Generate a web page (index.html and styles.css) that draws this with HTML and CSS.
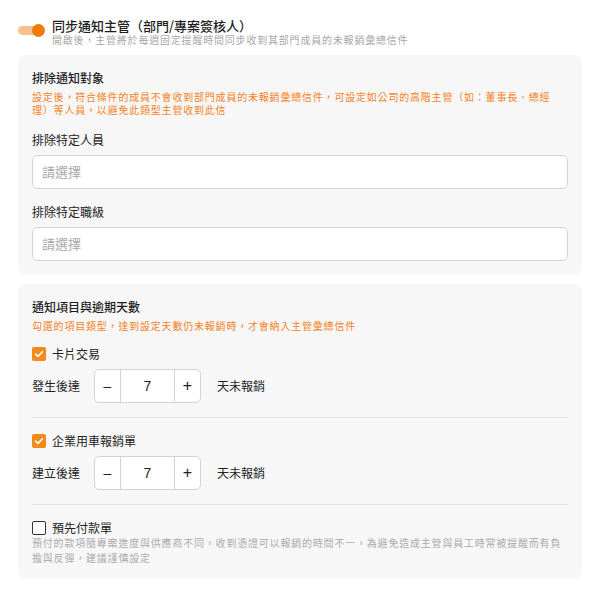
FILE: index.html
```html
<!DOCTYPE html>
<html lang="zh-Hant">
<head>
<meta charset="utf-8">
<link rel="stylesheet" href="styles.css">
</head>
<body>
<div class="page">
  <div class="header">
    <div class="toggle"><span class="knob"></span></div>
    <div class="header-text">
      <div class="header-title">同步通知主管（部門/專案簽核人）</div>
      <div class="header-sub">開啟後，主管將於每週固定提醒時間同步收到其部門成員的未報銷彙總信件</div>
    </div>
  </div>

  <div class="card">
    <div class="card-title">排除通知對象</div>
    <div class="hint">設定後，符合條件的成員不會收到部門成員的未報銷彙總信件，可設定如公司的高階主管（如：董事長、總經理）等人員，以避免此類型主管收到此信</div>
    <div class="field first">
      <div class="field-label">排除特定人員</div>
      <div class="select">請選擇</div>
    </div>
    <div class="field">
      <div class="field-label">排除特定職級</div>
      <div class="select">請選擇</div>
    </div>
  </div>

  <div class="card">
    <div class="card-title">通知項目與逾期天數</div>
    <div class="hint">勾選的項目類型，達到設定天數仍未報銷時，才會納入主管彙總信件</div>

    <div class="item first">
      <div class="check-row">
        <span class="checkbox checked"><svg viewBox="0 0 14 14" width="14" height="14"><path d="M3.6 7.2 L6 9.4 L10.4 4.8" fill="none" stroke="#fff" stroke-width="1.6" stroke-linecap="round" stroke-linejoin="round"/></svg></span>
        <span class="check-label">卡片交易</span>
      </div>
      <div class="step-row">
        <span class="step-label">發生後達</span>
        <div class="stepper">
          <span class="step-btn minus">–</span>
          <span class="step-val">7</span>
          <span class="step-btn plus">+</span>
        </div>
        <span class="step-after">天未報銷</span>
      </div>
    </div>

    <div class="item">
      <div class="check-row">
        <span class="checkbox checked"><svg viewBox="0 0 14 14" width="14" height="14"><path d="M3.6 7.2 L6 9.4 L10.4 4.8" fill="none" stroke="#fff" stroke-width="1.6" stroke-linecap="round" stroke-linejoin="round"/></svg></span>
        <span class="check-label">企業用車報銷單</span>
      </div>
      <div class="step-row">
        <span class="step-label">建立後達</span>
        <div class="stepper">
          <span class="step-btn minus">–</span>
          <span class="step-val">7</span>
          <span class="step-btn plus">+</span>
        </div>
        <span class="step-after">天未報銷</span>
      </div>
    </div>

    <div class="item last">
      <div class="check-row">
        <span class="checkbox"></span>
        <span class="check-label">預先付款單</span>
      </div>
      <div class="desc">預付的款項隨專案進度與供應商不同，收到憑證可以報銷的時間不一，為避免造成主管與員工時常被提醒而有負擔與反彈，建議謹慎設定</div>
    </div>
  </div>
</div>
</body>
</html>
```

FILE: styles.css
```css
* { box-sizing: border-box; }
html, body { margin: 0; padding: 0; background: #fff; }
body {
  font-family: "Noto Sans CJK TC", "Noto Sans", sans-serif;
  color: #222;
  text-spacing-trim: space-all;
}
.page {
  padding: 18px 12px 0 18px;
  display: flex;
  flex-direction: column;
  gap: 9px;
}
.header {
  display: flex;
  align-items: flex-start;
  gap: 10px;
  margin-bottom: 1px;
}
.toggle {
  position: relative;
  width: 24px;
  height: 9px;
  margin-top: 8px;
  border-radius: 5px;
  background: #f6c28f;
  flex: none;
}
.knob {
  position: absolute;
  right: -3px;
  top: -2px;
  width: 13px;
  height: 13px;
  border-radius: 50%;
  background: #f07a06;
}
.header-text { display: flex; flex-direction: column; }
.header-title {
  font-size: 13px;
  line-height: 14px;
  margin-top: 1px;
  font-weight: 500;
  color: #1e1e1e;
}
.header-sub {
  margin-top: 1px;
  font-size: 10px;
  line-height: 11px;
  letter-spacing: 0.8px;
  color: #a8a8a8;
}
.card {
  background: #f7f7f7;
  border-radius: 7px;
  padding: 14px;
}
.card-title {
  font-size: 12px;
  line-height: 18px;
  font-weight: 500;
  color: #1e1e1e;
}
.hint {
  margin-top: 3px;
  font-size: 10px;
  line-height: 13px;
  letter-spacing: 0.8px;
  color: #f5821f;
}
.field { margin-top: 14px; }
.field.first { margin-top: 15px; }
.field-label {
  font-size: 12px;
  line-height: 18px;
  color: #222;
  margin-bottom: 6px;
}
.select {
  height: 34px;
  background: #fff;
  border: 1px solid #d3d3d3;
  border-radius: 5px;
  padding-left: 9px;
  font-size: 13px;
  line-height: 32px;
  color: #a9a9a9;
}
.item {
  padding: 14px 0;
  border-top: 1px solid #e3e3e3;
}
.item.first { border-top: none; padding-top: 13px; }
.item.last { padding-bottom: 0; }
.check-row {
  display: flex;
  align-items: center;
  gap: 6px;
  height: 18px;
}
.checkbox {
  width: 14px;
  height: 14px;
  border-radius: 2px;
  border: 1.5px solid #333;
  background: #fff;
  flex: none;
  display: flex;
}
.checkbox.checked {
  border: none;
  background: #f28a1c;
}
.check-label {
  font-size: 12px;
  line-height: 18px;
  color: #222;
}
.step-row {
  margin-top: 6px;
  display: flex;
  align-items: center;
}
.step-label {
  font-size: 12px;
  line-height: 18px;
  width: 62px;
  color: #222;
}
.stepper {
  display: flex;
  height: 34px;
  border: 1px solid #d3d3d3;
  border-radius: 5px;
  background: #fff;
}
.step-btn, .step-val {
  display: flex;
  align-items: center;
  justify-content: center;
  font-family: "Liberation Sans", sans-serif;
  font-size: 14px;
  color: #222;
}
.minus { width: 25px; }
.step-val { width: 54px; border-left: 1px solid #d3d3d3; }
.plus { width: 26px; border-left: 1px solid #d3d3d3; font-size: 16px; }
.step-after {
  margin-left: 16px;
  font-size: 12px;
  line-height: 18px;
  color: #222;
}
.desc {
  margin-top: -2px;
  font-size: 10px;
  line-height: 15px;
  letter-spacing: 0.8px;
  color: #ababab;
}
```
